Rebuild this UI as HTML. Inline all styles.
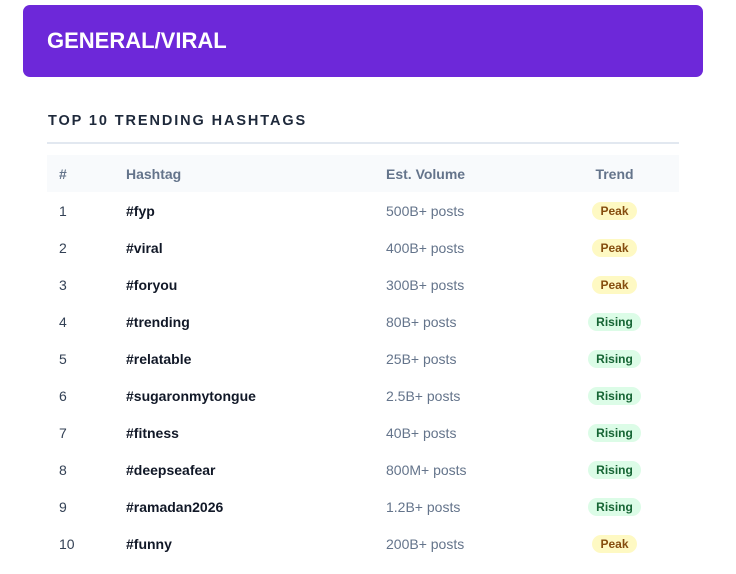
<!DOCTYPE html>
<html><head><style>
body{margin:0;background:#fff;font-family:"Liberation Sans",Arial,sans-serif;}
.hdr{position:absolute;left:23px;top:5px;width:680px;height:72px;background:#6d28d9;border-radius:7px;}
.hdr h1{margin:0;position:absolute;left:24px;top:24px;font-size:22px;line-height:24px;color:#fff;font-weight:bold;}
.sec{position:absolute;left:48px;top:113px;font-size:14.5px;font-weight:bold;letter-spacing:1.9px;color:#1e293b;}
.line{position:absolute;left:47px;top:142px;width:632px;height:2px;background:#e2e8f0;}
table{position:absolute;left:47px;top:155px;width:632px;border-collapse:collapse;font-size:14px;}
td,th{height:37px;padding:0;text-align:left;}
th{background:#f8fafc;color:#64748b;font-weight:bold;font-size:14px;}
td.n,th.n{padding-left:12px;width:67px;color:#334155;}
th.n{color:#64748b}
td.h{font-weight:bold;color:#111827;width:260px;}
td.v{color:#64748b;width:164px;}
.t{text-align:center;}
.b{display:inline-block;font-size:12px;font-weight:bold;padding:2px 8px;border-radius:10px;line-height:14px;}
.p{background:#fef9c3;color:#854d0e;}
.r{background:#dcfce7;color:#166534;}
</style></head><body>
<div class="hdr"><h1>GENERAL/VIRAL</h1></div>
<div class="sec">TOP 10 TRENDING HASHTAGS</div>
<div class="line"></div>
<table>
<tr><th class="n">#</th><th>Hashtag</th><th>Est. Volume</th><th class="t">Trend</th></tr>
<tr><td class="n">1</td><td class="h">#fyp</td><td class="v">500B+ posts</td><td class="t"><span class="b p">Peak</span></td></tr>
<tr><td class="n">2</td><td class="h">#viral</td><td class="v">400B+ posts</td><td class="t"><span class="b p">Peak</span></td></tr>
<tr><td class="n">3</td><td class="h">#foryou</td><td class="v">300B+ posts</td><td class="t"><span class="b p">Peak</span></td></tr>
<tr><td class="n">4</td><td class="h">#trending</td><td class="v">80B+ posts</td><td class="t"><span class="b r">Rising</span></td></tr>
<tr><td class="n">5</td><td class="h">#relatable</td><td class="v">25B+ posts</td><td class="t"><span class="b r">Rising</span></td></tr>
<tr><td class="n">6</td><td class="h">#sugaronmytongue</td><td class="v">2.5B+ posts</td><td class="t"><span class="b r">Rising</span></td></tr>
<tr><td class="n">7</td><td class="h">#fitness</td><td class="v">40B+ posts</td><td class="t"><span class="b r">Rising</span></td></tr>
<tr><td class="n">8</td><td class="h">#deepseafear</td><td class="v">800M+ posts</td><td class="t"><span class="b r">Rising</span></td></tr>
<tr><td class="n">9</td><td class="h">#ramadan2026</td><td class="v">1.2B+ posts</td><td class="t"><span class="b r">Rising</span></td></tr>
<tr><td class="n">10</td><td class="h">#funny</td><td class="v">200B+ posts</td><td class="t"><span class="b p">Peak</span></td></tr>
</table>
</body></html>
